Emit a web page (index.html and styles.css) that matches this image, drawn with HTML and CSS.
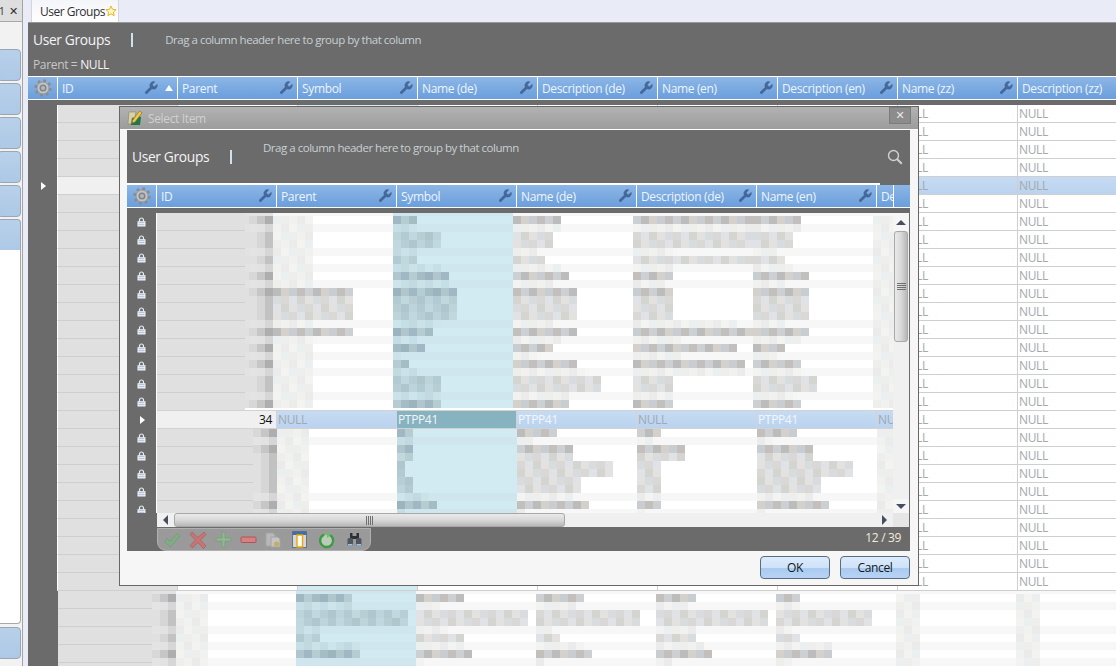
FILE: index.html
```html
<!DOCTYPE html>
<html lang="en">
<head>
<meta charset="utf-8">
<title>User Groups</title>
<link rel="stylesheet" href="styles.css">
</head>
<body>
<svg class="defs" width="0" height="0" aria-hidden="true">
  <symbol id="wrench" viewBox="0 0 24 24"><path d="M14.7 6.3a1 1 0 0 0 0 1.4l1.6 1.6a1 1 0 0 0 1.4 0l3.77-3.77a6 6 0 0 1-7.94 7.94l-6.91 6.91a2.12 2.12 0 0 1-3-3l6.91-6.91a6 6 0 0 1 7.94-7.94l-3.76 3.76z"/></symbol>
  <symbol id="gear" viewBox="0 0 18 18">
    <circle cx="9" cy="9" r="7.400" fill="none" stroke="#8c8c8c" stroke-width="2.600" stroke-dasharray="2.900 2.910"/>
    <circle cx="9" cy="9" r="6" fill="#c2c2c2" stroke="#8c8c8c" stroke-width=".7"/>
    <circle cx="9" cy="9" r="3.500" fill="#7f858c"/>
    <circle cx="9" cy="9" r="2" fill="#b4b8bc"/>
  </symbol>
  <symbol id="lock" viewBox="0 0 9 10">
    <path d="M2.500 4.500V3a2 2 0 0 1 4 0v1.500" fill="none" stroke="#e8eef6" stroke-width="1.200"/>
    <rect x=".5" y="4.200" width="8" height="5.300" fill="#f2f6fa"/>
    <path d="M1.500 5.700h6M1.500 7.700h6" stroke="#a8bcd8" stroke-width="1"/>
  </symbol>
</svg>

<div class="app">
  <aside class="side">
    <div class="side-top"><span class="side-pin">1</span><span class="side-x">✕</span></div>
    <div class="side-gap"></div>
    <div class="side-btn"></div>
    <div class="side-btn"></div>
    <div class="side-btn"></div>
    <div class="side-btn"></div>
    <div class="side-btn"></div>
    <div class="side-btn side-btn-open"></div>
    <div class="side-white"></div>
    <div class="side-btn side-btn-last"></div>
  </aside>

  <main class="work">
    <nav class="tabs">
      <div class="tab"><span class="tab-text">User Groups</span>
        <svg class="star" width="12" height="12" viewBox="0 0 12 12"><path d="M6 1l1.500 3.300 3.600.4-2.700 2.400.8 3.600L6 8.900l-3.200 1.800.8-3.600L.9 4.700l3.600-.4z" fill="#fff6c8" stroke="#e8b820" stroke-width="1"/></svg>
      </div>
    </nav>

    <section class="panel">
      <div class="bar">
        <span class="bar-title">User Groups</span>
        <span class="bar-sep"></span>
        <span class="bar-hint">Drag a column header here to group by that column</span>
      </div>
      <div class="filter">Parent = <b>NULL</b></div>
      <div class="head main-head">
        <div class="hc hc-gear"><svg width="18" height="18"><use href="#gear"/></svg></div>
        <div class="hc"><span>ID</span><svg class="wr wr-sort" width="16" height="16"><use href="#wrench"/></svg><i class="sort"></i></div>
        <div class="hc"><span>Parent</span><svg class="wr" width="16" height="16"><use href="#wrench"/></svg></div>
        <div class="hc"><span>Symbol</span><svg class="wr" width="16" height="16"><use href="#wrench"/></svg></div>
        <div class="hc"><span>Name (de)</span><svg class="wr" width="16" height="16"><use href="#wrench"/></svg></div>
        <div class="hc"><span>Description (de)</span><svg class="wr" width="16" height="16"><use href="#wrench"/></svg></div>
        <div class="hc"><span>Name (en)</span><svg class="wr" width="16" height="16"><use href="#wrench"/></svg></div>
        <div class="hc"><span>Description (en)</span><svg class="wr" width="16" height="16"><use href="#wrench"/></svg></div>
        <div class="hc"><span>Name (zz)</span><svg class="wr" width="16" height="16"><use href="#wrench"/></svg></div>
        <div class="hc"><span>Description (zz)</span></div>
      </div>
      <div class="main-rows" id="mainRows"></div>
      <div class="band main-band" id="mainBand"></div>
    </section>
  </main>
</div>

<div class="dialog">
  <header class="dlg-title">
    <svg width="16" height="16" viewBox="0 0 16 16">
      <path d="M2 2h7l-1 5-3 1-1 6H1z" fill="#d9d2a8" stroke="#8a8460" stroke-width=".6"/>
      <path d="M4 15l1.500-7 3 1L11 6l3 1-1 8z" fill="#1c7a48"/>
      <path d="M5.500 10.500L12.500 1l2.500 1.800-7 9.200-2.500 1z" fill="#f2c84c" stroke="#9a7418" stroke-width=".7"/>
    </svg>
    <span>Select Item</span>
    <button class="dlg-close" type="button">✕</button>
  </header>

  <div class="dlg-content">
    <div class="dg-bar">
      <span class="dg-title">User Groups</span>
      <span class="dg-sep"></span>
      <span class="dg-hint">Drag a column header here to group by that column</span>
      <svg class="dg-search" width="16" height="16" viewBox="0 0 16 16" fill="none" stroke="#d0d0d0" stroke-width="1.400"><circle cx="6.500" cy="6.500" r="5"/><path d="M10.200 10.200l4.600 4.600" stroke-width="2"/></svg>
    </div>
    <div class="head dg-head">
      <div class="hc hc-gear"><svg width="18" height="18"><use href="#gear"/></svg></div>
      <div class="hc"><span>ID</span><svg class="wr" width="16" height="16"><use href="#wrench"/></svg></div>
      <div class="hc"><span>Parent</span><svg class="wr" width="16" height="16"><use href="#wrench"/></svg></div>
      <div class="hc"><span>Symbol</span><svg class="wr" width="16" height="16"><use href="#wrench"/></svg></div>
      <div class="hc"><span>Name (de)</span><svg class="wr" width="16" height="16"><use href="#wrench"/></svg></div>
      <div class="hc"><span>Description (de)</span><svg class="wr" width="16" height="16"><use href="#wrench"/></svg></div>
      <div class="hc"><span>Name (en)</span><svg class="wr" width="16" height="16"><use href="#wrench"/></svg></div>
      <div class="hc hc-cut"><span>De</span></div>
      <div class="hc hc-fill"></div>
    </div>
    <div class="dg-body">
      <div class="dg-ind" id="dgInd"></div>
      <div class="dg-data">
        <div class="dg-upper">
          <div class="dg-rows">
            <div class="band dg-top" id="dgTop"></div>
            <div class="dg-sel">
              <div class="sc sc-id">34</div>
              <div class="sc sc-null">NULL</div>
              <div class="sc sc-sym">PTPP41</div>
              <div class="sc">PTPP41</div>
              <div class="sc sc-null">NULL</div>
              <div class="sc">PTPP41</div>
              <div class="sc sc-null sc-cut">NULL</div>
            </div>
            <div class="band dg-low" id="dgLow"></div>
          </div>
          <div class="vscroll">
            <div class="sb-btn"><i class="arr arr-up"></i></div>
            <div class="v-thumb"><i class="v-grip"></i></div>
            <div class="sb-track"></div>
            <div class="sb-btn sb-btn-down"><i class="arr arr-down"></i></div>
          </div>
        </div>
        <div class="hscroll">
          <div class="hb-btn"><i class="arr arr-left"></i></div>
          <div class="h-thumb"><i class="h-grip"></i></div>
          <div class="sb-track"></div>
          <div class="hb-btn"><i class="arr arr-right"></i></div>
          <div class="sb-corner"></div>
        </div>
      </div>
    </div>
    <div class="dg-foot">
      <div class="tools">
        <svg width="18" height="18" viewBox="0 0 18 18"><path d="M1.500 10l2.500-2.500 3 3L14.500 2.500 17 5 7 16z" fill="#7fae84" stroke="#689670" stroke-width=".6"/></svg>
        <svg width="18" height="18" viewBox="0 0 18 18"><path d="M3 1l6 5.500L15 1l2 2.500L11.500 9l5.500 6-2.500 2.500L9 11.500 3.500 17 1 14.500 6.500 9 1 3.500z" fill="#c87474" stroke="#a85858" stroke-width=".6"/></svg>
        <svg width="17" height="17" viewBox="0 0 17 17"><path d="M7 1h3v6h6v3h-6v6H7v-6H1V7h6z" fill="#8fb88f" stroke="#6f9a72" stroke-width=".6"/></svg>
        <svg width="17" height="8" viewBox="0 0 17 8"><rect x="1" y="1" width="15" height="5.500" rx="1" fill="#d88080" stroke="#a85858"/></svg>
        <svg width="16" height="16" viewBox="0 0 16 16"><path d="M1 1h7l2 2v11H1z" fill="#b8b8b8" stroke="#a4a4a4"/><path d="M6 5h7l2 2v8H6z" fill="#c4c4c4" stroke="#a4a4a4"/><circle cx="11.500" cy="12" r="2.500" fill="#c8ac60"/></svg>
        <svg class="tool-far" width="15" height="17" viewBox="0 0 15 17"><rect x=".5" y=".5" width="14" height="16" fill="#d6d6d6" stroke="#6a7480"/><rect x=".5" y=".5" width="14" height="3.500" fill="#3f6ea8"/><rect x="5" y="4" width="5.500" height="12" fill="#fff" stroke="#f0a800" stroke-width="1.400"/></svg>
        <svg class="tool-far" width="18" height="18" viewBox="0 0 18 18" fill="none"><circle cx="9" cy="10" r="6.200" fill="#b8ccb8"/><path d="M10.500 3.300a6.500 6.500 0 1 1-4.500.3" stroke="#3f9a46" stroke-width="2.400"/><path d="M9 0l4 3.500L9 7z" fill="#6cc060"/></svg>
        <svg class="tool-mid" width="17" height="16" viewBox="0 0 17 16"><path d="M4 1h2.500v6H4zM10.500 1H13v6h-2.500zM6.500 4h4v3h-4z" fill="#2c3038"/><rect x="1.500" y="6" width="5.500" height="8" rx="1.500" fill="#50565e"/><rect x="10" y="6" width="5.500" height="8" rx="1.500" fill="#50565e"/><path d="M2 12.800h4.500M10.500 12.800H15" stroke="#9cc0e4" stroke-width="1.800"/></svg>
      </div>
      <span class="count">12 / 39</span>
    </div>
  </div>

  <footer class="dlg-foot">
    <button class="btn" type="button">OK</button>
    <button class="btn" type="button">Cancel</button>
  </footer>
</div>
<script src="grid.js"></script>
</body>
</html>
```

FILE: styles.css
```css
* { box-sizing: border-box; }
html, body { margin: 0; height: 100%; }
body {
  position: relative;
  width: 1116px;
  height: 666px;
  overflow: hidden;
  background: #e9ecf6;
  font-family: "Open Sans", "Noto Sans", sans-serif;
  font-size: 12px;
  letter-spacing: -0.35px;
}
.defs { position: absolute; }
.app { display: flex; height: 666px; }

/* left rail */
.side {
  width: 23px;
  flex: none;
  display: flex;
  flex-direction: column;
  background: #f2f2f2;
  border-right: 1px solid #a4a4a4;
}
.side-top {
  height: 22px;
  flex: none;
  display: flex;
  align-items: center;
  justify-content: space-between;
  background: #dedede;
  border-bottom: 1px solid #a8a8a8;
  color: #303030;
  padding-right: 4px;
}
.side-pin { margin-left: -1px; font-size: 10px; }
.side-x { font-size: 11px; }
.side-gap { height: 27px; flex: none; }
.side-btn {
  height: 32px;
  flex: none;
  margin: 0 1px 2px -3px;
  background: linear-gradient(#b8d0ea, #adc9e6);
  border: 1px solid #9aa6b4;
  border-radius: 4px;
}
.side-btn-open {
  height: 31px;
  margin-bottom: 0;
  border-bottom: 0;
  border-radius: 4px 4px 0 0;
}
.side-white {
  height: 374px;
  flex: none;
  margin: 0 1px 3px -3px;
  background: #fff;
  border: 1px solid #a8a8a8;
  border-top: 0;
  border-radius: 0 0 4px 4px;
}

/* tabs and main panel */
.work {
  flex: 1;
  min-width: 0;
  padding-left: 5px;
  display: flex;
  flex-direction: column;
}
.tabs { height: 22px; flex: none; padding-left: 3px; }
.tab {
  width: 88px;
  height: 22px;
  display: flex;
  align-items: center;
  justify-content: space-between;
  padding: 0 1px 0 8px;
  background: linear-gradient(#f4f5fa, #fff);
  border: 1px solid #d4d6de;
  border-width: 0 1px;
  color: #303030;
}
.tab-text { white-space: nowrap; letter-spacing: -0.5px; }
.panel {
  flex: 1;
  min-height: 0;
  background: #6b6b6b;
  border-top: 1px solid #999;
  overflow: hidden;
}
.bar {
  height: 33px;
  display: flex;
  align-items: center;
  padding: 0 0 0 5px;
}
.bar-title, .dg-title { font-size: 13.8px; color: #f4f4f4; }
.bar-sep, .dg-sep { width: 2px; height: 14px; background: #cfe0ee; }
.bar-sep { margin: 0 32px 0 21px; }
.bar-hint, .dg-hint { color: #c8d0d4; font-size: 11.5px; letter-spacing: -0.48px; }
.filter {
  height: 20px;
  padding: 0 0 0 5px;
  color: #c8c8c8;
}
.filter b { font-weight: 400; color: #f4f4f4; }

/* column headers */
.head {
  display: flex;
  background: #fff;
  padding: 1px 0;
}
.main-head { height: 24px; }
.hc {
  flex: none;
  width: 120px;
  height: 22px;
  display: flex;
  align-items: center;
  justify-content: space-between;
  padding: 0 3px 0 4px;
  border-right: 1px solid #fff;
  background: linear-gradient(#8cb6e6, #6a9edc);
  color: #edf4fc;
  position: relative;
}
.hc-gear { width: 30px; padding: 0; justify-content: center; }
.wr { fill: #44689a; flex: none; }
.wr-sort { margin-right: 15px; }
.sort {
  position: absolute;
  right: 4px;
  top: 8px;
  border: 4px solid transparent;
  border-top: 0;
  border-bottom: 6px solid #fff;
}

/* main rows */
.main-rows { margin-top: 5px; }
.mr { display: flex; height: 18px; }
.mr-gut { width: 29px; flex: none; }
.mc {
  width: 120px;
  flex: none;
  height: 18px;
  line-height: 17px;
  padding-left: 1px;
  background: #fff;
  border: solid #cfcfcf;
  border-width: 0 1px 1px 0;
  color: #a4a8ac;
}
.mc-id { background: #e0e0e0; border-left: 1px solid #fff; width: 121px; }
.mc-sym { background: #d2ebf3; }
.mr-sel .mc { background: linear-gradient(#c6dbf3, #bbd3ef); }
.mr-sel .mc-id { background: #f0f0f0; }

/* mosaic of masked cell values */
.band { display: flex; overflow: hidden; }
.idl {
  flex: none;
  background: repeating-linear-gradient(#e0e0e0 0 17px, #cfcfcf 17px 18px);
}
.mos { flex: 1; min-width: 0; display: flex; flex-direction: column; }
.mline { display: flex; height: 8px; flex: none; }
.mline-strip { height: 3px; }
.mcol { flex: none; height: 100%; background: #fff; display: flex; }
.mcol-sym { background: #d2ebf3; }
.mcol-tail { background: #e0e0e0; justify-content: flex-end; }
.ln-l .mcol { background: #f7f7f7; }
.ln-l .mcol-sym { background: #cfe6ee; }
.ln-l .mcol-tail { background: #e2e2e2; }
.run {
  display: block;
  height: 100%;
  background-image: linear-gradient(90deg, var(--a) 0 8px, var(--b) 8px 16px, var(--c) 16px 24px, var(--d) 24px 32px, var(--e) 32px 40px);
  background-size: 40px 8px;
}
.sh-s { --a: #c2bfbc; --b: #ccd0d3; --c: #bcbcbc; --d: #d4d1cc; --e: #c8cdd1; }
.sh-m { --a: #dad8d6; --b: #e0e2e6; --c: #d4d4d1; --d: #e4e2e0; --e: #d8dcde; }
.sh-l { --a: #eeeeec; --b: #f1f1ef; --c: #ebebeb; --d: #f3f3f1; --e: #ecefef; }
.sh-ts { --a: #a4bcc4; --b: #9cb4bd; --c: #b0c6cc; --d: #a0b8c4; --e: #b4ccd2; }
.sh-tm { --a: #b6ced4; --b: #aec6cc; --c: #bdd4da; --d: #b2cad2; --e: #c0d8de; }
.sh-tl { --a: #c6dfe6; --b: #c2d9e0; --c: #cbe2e9; --d: #c4dce4; --e: #cde4ea; }
.sh-ds { --a: #d8d8d8; --b: #c6c6c6; --c: #aeaeb0; }
.sh-dm { --a: #e0e0e0; --b: #d6d6d6; --c: #c2c2c2; }
.sh-dl { --a: #e4e4e4; --b: #e2e2e2; --c: #d6d6d6; }
.sh-ds, .sh-dm, .sh-dl { --d: #e0e0e0; --e: #e0e0e0; }

.main-band { height: 76px; margin-left: 29px; }
.main-band .idl { margin-left: 1px; }

/* dialog window */
.dialog {
  position: absolute;
  left: 119px;
  top: 106px;
  width: 800px;
  height: 480px;
  display: flex;
  flex-direction: column;
  background: #f6f6f6;
  border: 1px solid #666;
}
.dlg-title {
  height: 23px;
  flex: none;
  display: flex;
  align-items: center;
  gap: 5px;
  padding: 0 7px;
  background: linear-gradient(#b2b2b2, #9c9c9c);
  border-bottom: 1px solid #fff;
  color: #d0d0d0;
}
.dlg-close {
  margin: -6px 0 0 auto;
  width: 22px;
  height: 17px;
  padding: 0;
  background: #8c8c8c;
  border: 1px solid #7c7c7c;
  color: #e8e8e8;
  font: 11px "DejaVu Sans", sans-serif;
}
.dlg-content {
  height: 421px;
  flex: none;
  margin: 0 8px 0 7px;
  background: #6b6b6b;
  display: flex;
  flex-direction: column;
}
.dg-bar {
  height: 53px;
  flex: none;
  position: relative;
  display: flex;
  align-items: center;
  padding-left: 5px;
}
.dg-sep { margin-left: 21px; }
.dg-hint { position: absolute; left: 136px; top: 10px; }
.dg-search { position: absolute; right: 7px; top: 19px; }
.dg-head {
  height: 25px;
  padding-top: 2px;
  flex: none;
  background:
    linear-gradient(#fff, #fff) 0 0 / 753px 2px no-repeat,
    linear-gradient(#fff, #fff) 0 100% / 100% 1px no-repeat;
}
.hc-cut { width: 17px; overflow: hidden; padding-right: 0; }
.hc-fill { width: 16px; border-right: 0; }
.dg-body {
  margin-top: 5px;
  height: 314px;
  flex: none;
  display: flex;
}
.dg-ind { width: 30px; flex: none; height: 300px; overflow: hidden; border-right: 1px solid #fff; }
.ind { height: 18px; display: flex; align-items: center; justify-content: center; }
.dg-data { width: 752px; flex: none; display: flex; flex-direction: column; background: #fff; }
.dg-upper { height: 300px; flex: none; display: flex; }
.dg-rows { width: 736px; flex: none; display: flex; flex-direction: column; overflow: hidden; }
.dg-top { height: 197px; flex: none; }
.dg-low { height: 84px; flex: none; }
.dg-sel {
  height: 19px;
  flex: none;
  display: flex;
  border: solid #d2d2d2;
  border-width: 1px 0;
  background: linear-gradient(#c6dbf3, #bbd3ef);
}
.sc {
  width: 120px;
  flex: none;
  padding-left: 1px;
  line-height: 17px;
  color: #f2f6fc;
  border-right: 1px solid #d0d4da;
}
.sc-id { background: #f0f0f0; text-align: right; color: #111; padding-right: 4px; }
.sc-null { color: #a0a8b4; }
.sc-sym { background: #87b2bf; }
.sc-cut { width: 16px; overflow: hidden; border-right: 0; white-space: nowrap; }

/* scrollbars */
.vscroll {
  width: 16px;
  flex: none;
  display: flex;
  flex-direction: column;
  background: #f0f0f0;
}
.sb-btn { height: 18px; flex: none; display: flex; align-items: center; justify-content: center; background: #f6f6f6; }
.sb-btn-down { height: 14px; }
.sb-track { flex: 1; min-width: 0; min-height: 0; background: #f0f0f0; }
.v-thumb {
  height: 111px;
  flex: none;
  margin: 0 1px;
  display: flex;
  align-items: center;
  justify-content: center;
  background: linear-gradient(90deg, #eaeaea, #d8d8d8 50%, #b8b8b8);
  border: 1px solid #a8a8a8;
  border-radius: 3px;
}
.v-grip { width: 9px; height: 7px; background: repeating-linear-gradient(#707070 0 1px, transparent 1px 2px); }
.hscroll { height: 14px; flex: none; display: flex; background: #f0f0f0; }
.hb-btn { width: 17px; flex: none; display: flex; align-items: center; justify-content: center; }
.h-thumb {
  width: 391px;
  flex: none;
  display: flex;
  align-items: center;
  justify-content: center;
  background: linear-gradient(#eaeaea, #d8d8d8 50%, #b8b8b8);
  border: 1px solid #a8a8a8;
  border-radius: 3px;
}
.h-grip { width: 7px; height: 9px; background: repeating-linear-gradient(90deg, #707070 0 1px, transparent 1px 2px); }
.sb-corner { width: 16px; flex: none; background: #e6e6e6; }
.arr { display: block; border: 4px solid transparent; }
.arr-up { border-top: 0; border-bottom: 5px solid #464e60; border-left-width: 5px; border-right-width: 5px; }
.arr-down { border-bottom: 0; border-top: 5px solid #464e60; border-left-width: 5px; border-right-width: 5px; }
.arr-left { border-left: 0; border-right: 5px solid #464e60; border-top-width: 5px; border-bottom-width: 5px; }
.arr-right { border-right: 0; border-left: 5px solid #464e60; border-top-width: 5px; border-bottom-width: 5px; }

/* dialog foot */
.dg-foot { height: 24px; flex: none; display: flex; align-items: flex-start; justify-content: space-between; padding: 1px 9px 0 30px; }
.tools {
  width: 214px;
  height: 23px;
  display: flex;
  align-items: center;
  gap: 8px;
  padding: 0 0 0 5px;
  background: #9a9a9a;
  border: 1px solid #b0b0b0;
  border-radius: 0 0 9px 9px;
}
.tool-far { margin-left: 3px; }
.tool-mid { margin-left: 2px; }
.count { color: #f2ecd8; margin-top: 1px; }
.dlg-foot {
  flex: 1;
  display: flex;
  justify-content: flex-end;
  align-items: flex-start;
  gap: 10px;
  padding: 5px 8px 0 0;
}
.btn {
  width: 70px;
  height: 23px;
  padding: 0;
  font: inherit;
  letter-spacing: inherit;
  color: #101820;
  background: linear-gradient(#dcebfb 0, #cfe2f8 50%, #a9caf0 55%, #b8d4f4 100%);
  border: 1px solid #5c6c80;
  border-radius: 4px;
}
```

FILE: grid.js
```js
// Builds the repeated grid rows and the masked (pixelated) cell values.
var T = "s l m m l m l s l s m m m l s l s l s l m m l s".split(" ");
var L = "s l s m m m m m l s l".split(" ");
var M = "s l m m l m l s l l".split(" ");

function repeat(n, v) { var a = []; for (var i = 0; i < n; i++) a.push(v); return a; }

function column(width, lens, kind) { return { w: width, lens: lens, kind: kind }; }

function shade(kind, strength, n) {
  if (kind === "tail") return "sh-d" + strength;
  if (kind === "sym") return "sh-t" + strength;
  if (kind === "pale") return n > 6 && strength !== "l" ? "sh-" + strength : "sh-l";
  if (kind === "faint") return "sh-l";
  return "sh-" + strength;
}

function buildBand(el, idWidth, strengths, cols, strip) {
  var id = document.createElement("div");
  id.className = "idl";
  id.style.width = idWidth + "px";
  el.appendChild(id);
  var mos = document.createElement("div");
  mos.className = "mos";
  el.appendChild(mos);

  function line(s, r, cls) {
    var ln = document.createElement("div");
    ln.className = "mline ln-" + s + (cls ? " " + cls : "");
    cols.forEach(function (c, ci) {
      var cell = document.createElement("div");
      cell.className = "mcol" + (c.kind === "sym" ? " mcol-sym" : "") + (c.kind === "tail" ? " mcol-tail" : "");
      cell.style.width = c.w + "px";
      var n = r < 0 ? 0 : c.lens[r] || 0;
      if (n) {
        var run = document.createElement("span");
        run.className = "run " + shade(c.kind, s, n);
        run.style.width = Math.min(n * 8, c.w) + "px";
        if (c.kind !== "tail") run.style.backgroundPosition = ((r * 13 + ci * 11) % 5) * 8 + "px 0";
        cell.appendChild(run);
      }
      ln.appendChild(cell);
    });
    mos.appendChild(ln);
  }
  if (strip) line("l", -1, "mline-strip");
  strengths.forEach(function (s, r) { line(s, r); });
}

// dialog: rows above the selected one
var nameDe = [6,6,5,5,3,4,6,7,5,8,8,8,8,5,8,6,5,3,8,9,11,11,7,7];
buildBand(document.getElementById("dgTop"), 88, T, [
  column(28, repeat(24, 3), "tail"),
  column(120, [5,5,5,5,5,5,5,5,5,10,10,10,10,5,10,5,5,5,5,5,5,5,5,5], "pale"),
  column(120, [3,3,6,6,3,3,6,7,7,8,8,8,8,6,5,3,4,1,2,3,6,6,6,6], "sym"),
  column(120, nameDe, "text"),
  column(120, [15,15,15,15,5,15,5,5,4,5,5,5,5,13,15,6,13,6,14,14,5,5,5,5], "text"),
  column(120, [6,6,5,5,3,4,5,7,4,7,7,7,7,4,7,6,4,3,6,6,8,8,5,6], "text"),
  column(20, repeat(24, 3), "pale")
], true);

// dialog: rows below the selected one
var low = [5,2,7,7,12,12,8,8,7,9,1];
buildBand(document.getElementById("dgLow"), 96, L, [
  column(24, repeat(11, 3), "tail"),
  column(120, repeat(11, 4), "pale"),
  column(120, [2,2,2,2,1,1,2,2,4,5,1], "sym"),
  column(120, low, "text"),
  column(120, [3,2,6,6,3,3,3,3,3,3,1], "text"),
  column(120, low, "text"),
  column(16, repeat(11, 2), "pale")
], false);

// main grid: rows below the dialog
buildBand(document.getElementById("mainBand"), 94, M, [
  column(24, repeat(10, 3), "tail"),
  column(120, repeat(10, 4), "pale"),
  column(120, [7,7,14,14,3,3,8,8,0,0], "sym"),
  column(120, [6,3,14,14,4,6,6,7,1,0], "text"),
  column(120, [6,5,13,13,2,3,6,7,1,0], "text"),
  column(120, [5,4,14,14,5,5,6,7,2,0], "text"),
  column(120, [3,3,12,12,2,3,7,7,2,0], "text"),
  column(120, repeat(10, 3), "faint"),
  column(100, repeat(10, 3), "faint")
], true);

// main grid rows
var rows = document.getElementById("mainRows");
for (var i = 0; i < 27; i++) {
  var r = document.createElement("div");
  r.className = "mr" + (i === 4 ? " mr-sel" : "");
  var html = '<div class="mr-gut"></div><div class="mc mc-id"></div><div class="mc"></div><div class="mc mc-sym"></div>';
  for (var c = 0; c < 4; c++) html += '<div class="mc"></div>';
  html += '<div class="mc">NULL</div><div class="mc">NULL</div>';
  r.innerHTML = html;
  rows.appendChild(r);
}

// row indicators
var ind = document.getElementById("dgInd");
var lockSvg = '<svg width="9" height="10"><use href="#lock"/></svg>';
var arrow = '<svg width="6" height="8" viewBox="0 0 6 8"><path d="M1 0l5 4-5 4z" fill="#fff"/></svg>';
for (var k = 0; k < 17; k++) {
  var d = document.createElement("div");
  d.className = "ind";
  d.innerHTML = k === 11 ? arrow : lockSvg;
  ind.appendChild(d);
}
// selected row marker of the main grid
var gut = rows.children[4].firstChild;
gut.className += " ind";
gut.innerHTML = arrow;
```
